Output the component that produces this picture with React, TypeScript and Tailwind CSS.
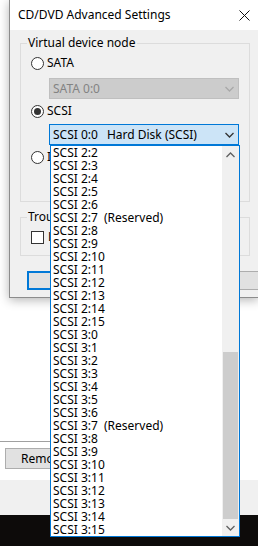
import React from 'react';

const font = { fontFamily: '"Noto Sans", "Liberation Sans", sans-serif' };

const items: { id: string; note?: string }[] = [
  ...[2, 3, 4, 5, 6, 7, 8, 9, 10, 11, 12, 13, 14, 15].map((n) => ({
    id: `SCSI 2:${n}`,
    note: n === 7 ? '(Reserved)' : undefined,
  })),
  ...Array.from({ length: 16 }, (_, n) => ({
    id: `SCSI 3:${n}`,
    note: n === 7 ? '(Reserved)' : undefined,
  })),
];

const Chevron: React.FC<{ up?: boolean; color: string }> = ({ up, color }) => (
  <svg width="9" height="6" viewBox="0 0 9 6" className="block">
    <path
      d={up ? 'M0.5 5 L4.5 1 L8.5 5' : 'M0.5 1 L4.5 5 L8.5 1'}
      fill="none"
      stroke={color}
      strokeWidth="1.3"
    />
  </svg>
);

const Radio: React.FC<{ checked?: boolean }> = ({ checked }) => (
  <div className="w-[13px] h-[13px] rounded-full border border-[#333333] bg-white flex items-center justify-center shrink-0">
    {checked && <div className="w-[7px] h-[7px] rounded-full bg-[#333333]" />}
  </div>
);

const GroupLabel: React.FC<{ text: string }> = ({ text }) => (
  <span className="absolute -top-[9px] left-[6px] px-[1px] bg-[#f0f0f0] text-[12px] leading-[16px] text-black whitespace-nowrap">
    {text}
  </span>
);

const App: React.FC = () => {
  return (
    <div className="relative w-[258px] h-[546px] overflow-hidden bg-white" style={font}>
      {/* window behind the dialog */}
      <div className="h-[441px] bg-white" />
      <div className="h-px w-[120px] bg-[#a0a0a0]" />
      <div className="h-[38px] bg-white pt-[6px] pl-[5px]">
        <div className="w-[75px] h-[21px] bg-[#e1e1e1] border border-[#adadad] flex items-center pl-[15px] text-[12px] text-black">
          Remove
        </div>
      </div>
      <div className="h-[35px] bg-[#f0f0f0]" />
      <div className="h-[31px] bg-[#0d0b0a]" />

      {/* dialog */}
      <div className="absolute left-[9px] top-0 w-[250px] h-[298px] bg-[#f0f0f0] border-l border-b border-[#8c8c8c] shadow-[0_2px_10px_rgba(0,0,0,0.3)]">
        <div className="h-[30px] bg-white flex items-center justify-between pl-[8px] pr-[9px]">
          <span className="text-[12px] text-black">CD/DVD Advanced Settings</span>
          <svg width="11" height="11" viewBox="0 0 11 11">
            <path d="M0.5 0.5 L10.5 10.5 M10.5 0.5 L0.5 10.5" stroke="#111" strokeWidth="1" />
          </svg>
        </div>

        <div className="pl-[10px]">
          <div className="relative mt-[13px] w-[230px] h-[159px] border border-[#dcdcdc]">
            <GroupLabel text="Virtual device node" />
            <div className="mt-[12px] ml-[10px] h-[14px] flex items-center gap-[3px] text-[12px] text-black">
              <Radio />
              <span>SATA</span>
            </div>
            <div className="mt-[8px] ml-[28px] w-[190px] h-[21px] bg-[#cccccc] border border-[#bfbfbf] flex items-center justify-between pl-[3px] pr-[4px] text-[12px] text-[#838383]">
              <span>SATA 0:0</span>
              <Chevron color="#a8a8a8" />
            </div>
            <div className="mt-[5px] ml-[10px] h-[14px] flex items-center gap-[3px] text-[12px] text-black">
              <Radio checked />
              <span>SCSI</span>
            </div>
            <div className="mt-[6px] ml-[28px] w-[190px] h-[21px] bg-[#cce4f7] border border-[#0078d7] flex items-center justify-between pl-[3px] pr-[4px] text-[12px] text-black">
              <span>
                SCSI 0:0<span className="ml-[9px]">Hard Disk (SCSI)</span>
              </span>
              <Chevron color="#333333" />
            </div>
            <div className="mt-[5px] ml-[10px] h-[14px] flex items-center gap-[3px] text-[12px] text-black">
              <Radio />
              <span>IDE</span>
            </div>
          </div>

          <div className="relative mt-[15px] w-[230px] h-[39px] border border-[#dcdcdc]">
            <GroupLabel text="Troubleshooting" />
            <div className="mt-[12px] ml-[10px] h-[14px] flex items-center gap-[4px] text-[12px] text-black">
              <div className="w-[13px] h-[13px] border border-[#333333] bg-white" />
              <span>Legacy emulation</span>
            </div>
          </div>

          <div className="mt-[15px] ml-[7px] flex gap-[5px] text-[12px] text-black">
            <div className="w-[75px] h-[19px] bg-[#e1e1e1] border-2 border-[#0078d7] flex items-center justify-center">OK</div>
            <div className="w-[75px] h-[19px] bg-[#e1e1e1] border border-[#adadad] flex items-center justify-center">Cancel</div>
            <div className="w-[75px] h-[19px] bg-[#e1e1e1] border border-[#adadad] flex items-center justify-center">Help</div>
          </div>
        </div>

        {/* open drop-down list */}
        <div className="absolute left-[40px] top-[145px] w-[190px] h-[392px] bg-white border border-[#0078d7] flex">
          <div className="flex-1 pl-[2px]">
            {items.map((it) => (
              <div key={it.id} className="h-[13px] flex items-center text-[12px] leading-[13px] text-black whitespace-nowrap">
                <span className="w-[51px]">{it.id}</span>
                {it.note && <span>{it.note}</span>}
              </div>
            ))}
          </div>
          <div className="w-[17px] bg-[#f0f0f0] flex flex-col">
            <div className="h-[17px] flex items-center justify-center">
              <Chevron up color="#606060" />
            </div>
            <div className="flex-1 flex flex-col justify-end">
              <div className="h-[167px] mx-px bg-[#cdcdcd]" />
            </div>
            <div className="h-[17px] flex items-center justify-center">
              <Chevron color="#606060" />
            </div>
          </div>
        </div>
      </div>
    </div>
  );
};

export default App;
